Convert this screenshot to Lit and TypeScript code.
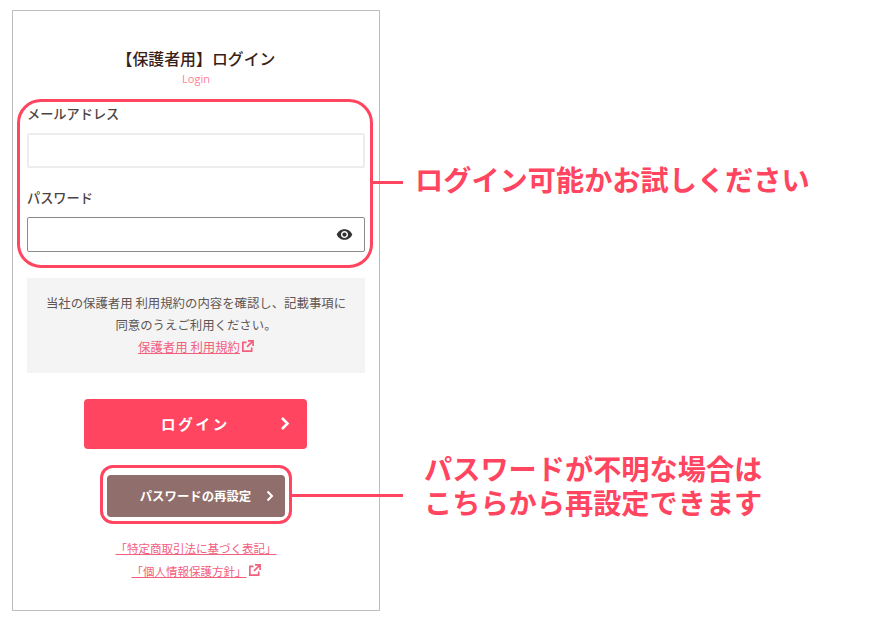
import { LitElement, html, css, svg } from 'lit';
import { customElement } from 'lit/decorators.js';

const externalIcon = svg`<path d="M6 2.500H2v9.500h9.500V8M7.500 1h5.500v5.500M13 1 6.500 7.500" fill="none" stroke="currentColor" stroke-width="1.8"/>`;

@customElement('app-root')
export class AppRoot extends LitElement {
  static styles = css`
    :host {
      display: block;
      width: 873px;
      height: 621px;
      position: relative;
      background: #fff;
      overflow: hidden;
      font-family: 'Noto Sans CJK JP', 'Noto Sans', sans-serif;
      color: #4a3a38;
    }
    * { box-sizing: border-box; }

    .frame {
      position: absolute;
      left: 12px;
      top: 10px;
      width: 368px;
      height: 601px;
      border: 1px solid #bdbdbd;
      display: flex;
      flex-direction: column;
      align-items: center;
      padding: 36px 14px 0;
    }
    h1 {
      margin: 0;
      font-size: 15.9px;
      line-height: 24px;
      font-weight: 500;
      color: #3a1e18;
      white-space: nowrap;
    }
    .sub {
      font-size: 11px;
      line-height: 14px;
      margin-top: 1px;
      margin-bottom: 1px;
      color: #ff8098;
      font-family: 'Open Sans', sans-serif;
    }
    .fields {
      align-self: stretch;
      margin-top: 13px;
      display: flex;
      flex-direction: column;
    }
    label {
      font-size: 13.2px;
      line-height: 18px;
      font-weight: 500;
      color: #4d4442;
    }
    .email-label { margin-top: 5px; }
    .input {
      height: 35px;
      border-radius: 2px;
      background: #fff;
    }
    .input.email { margin-top: 10px; border: 2px solid #ededed; }
    .input.pw {
      margin-top: 10px;
      border: 1px solid #8a8a8a;
      display: flex;
      align-items: center;
      justify-content: flex-end;
      padding-right: 11px;
    }
    .pw-label { margin-top: 21px; }
    .eye { width: 17px; height: 17px; color: #333; display: block; }

    .notice {
      align-self: stretch;
      margin-top: 26px;
      height: 95px;
      padding-top: 14px;
      background: #f4f4f4;
      text-align: center;
      font-size: 12.4px;
      line-height: 22px;
      color: #5f5654;
    }
    a {
      color: #f2607e;
      text-decoration: underline;
      white-space: nowrap;
    }
    a svg { width: 13px; height: 13px; vertical-align: -1px; margin-left: 1px; }

    .btn {
      display: flex;
      align-items: center;
      justify-content: center;
      position: relative;
      border: none;
      color: #fff;
      font-family: inherit;
      font-weight: 700;
    }
    .btn svg { position: absolute; fill: none; stroke: #fff; }
    .login {
      width: 223px;
      height: 50px;
      margin-top: 26px;
      margin-right: 1px;
      padding-bottom: 3px;
      border-radius: 4px;
      background: #ff4560;
      font-size: 14.5px;
      letter-spacing: 2.8px;
    }
    .login svg { right: 16px; width: 12px; height: 15px; stroke-width: 2.6; }
    .reset {
      width: 178px;
      height: 42px;
      margin-top: 26px;
      margin-right: 1px;
      border-radius: 4px;
      background: #8f6e6b;
      font-size: 12.4px;
    }
    .reset svg { right: 10px; width: 10px; height: 12px; stroke-width: 2; }
    .links {
      margin-top: 20px;
      text-align: center;
      font-size: 11.5px;
      line-height: 23px;
      display: flex;
      flex-direction: column;
    }

    /* callouts, drawn over the frame */
    .ring {
      position: absolute;
      border: 3px solid #ff4560;
      pointer-events: none;
    }
    .ring.form { left: 17px; top: 99px; width: 356px; height: 169px; border-radius: 24px; }
    .ring.reset-ring { left: 100px; top: 465px; width: 192px; height: 59px; border-radius: 13px; }
    .line {
      position: absolute;
      height: 3px;
      background: #ff4560;
    }
    .line.a { left: 372px; top: 181px; width: 31px; }
    .line.b { left: 291px; top: 494px; width: 112px; }
    .note {
      position: absolute;
      font-size: 28.2px;
      font-weight: 700;
      color: #ff4560;
      white-space: nowrap;
      line-height: 34px;
    }
    .note.a { left: 415px; top: 162px; }
    .note.b { left: 424px; top: 451px; }
  `;

  render() {
    return html`
      <div class="frame">
        <h1>【保護者用】ログイン</h1>
        <div class="sub">Login</div>
        <div class="fields">
          <label class="email-label">メールアドレス</label>
          <div class="input email"></div>
          <label class="pw-label">パスワード</label>
          <div class="input pw">
            <svg class="eye" viewBox="0 0 24 24" fill="currentColor">
              <path d="M12 4.500C7 4.500 2.730 7.610 1 12c1.730 4.390 6 7.500 11 7.500s9.270-3.110 11-7.500c-1.730-4.390-6-7.500-11-7.500zM12 17c-2.760 0-5-2.240-5-5s2.240-5 5-5 5 2.240 5 5-2.240 5-5 5zm0-8c-1.660 0-3 1.340-3 3s1.340 3 3 3 3-1.340 3-3-1.340-3-3-3z"/>
            </svg>
          </div>
        </div>
        <div class="notice">
          当社の保護者用 利用規約の内容を確認し、記載事項に<br />
          同意のうえご利用ください。<br />
          <a href="#">保護者用 利用規約<svg viewBox="0 0 14 14">${externalIcon}</svg></a>
        </div>
        <button class="btn login">ログイン
          <svg viewBox="0 0 12 15"><path d="M3 2l5.500 5.500L3 13"/></svg>
        </button>
        <button class="btn reset">パスワードの再設定
          <svg viewBox="0 0 10 12"><path d="M2.500 1.500 7 6l-4.500 4.500"/></svg>
        </button>
        <div class="links">
          <a href="#">「特定商取引法に基づく表記」</a>
          <a href="#">「個人情報保護方針」<svg viewBox="0 0 14 14">${externalIcon}</svg></a>
        </div>
      </div>

      <div class="ring form"></div>
      <div class="ring reset-ring"></div>
      <div class="line a"></div>
      <div class="line b"></div>
      <div class="note a">ログイン可能かお試しください</div>
      <div class="note b">パスワードが不明な場合は<br />こちらから再設定できます</div>
    `;
  }
}
